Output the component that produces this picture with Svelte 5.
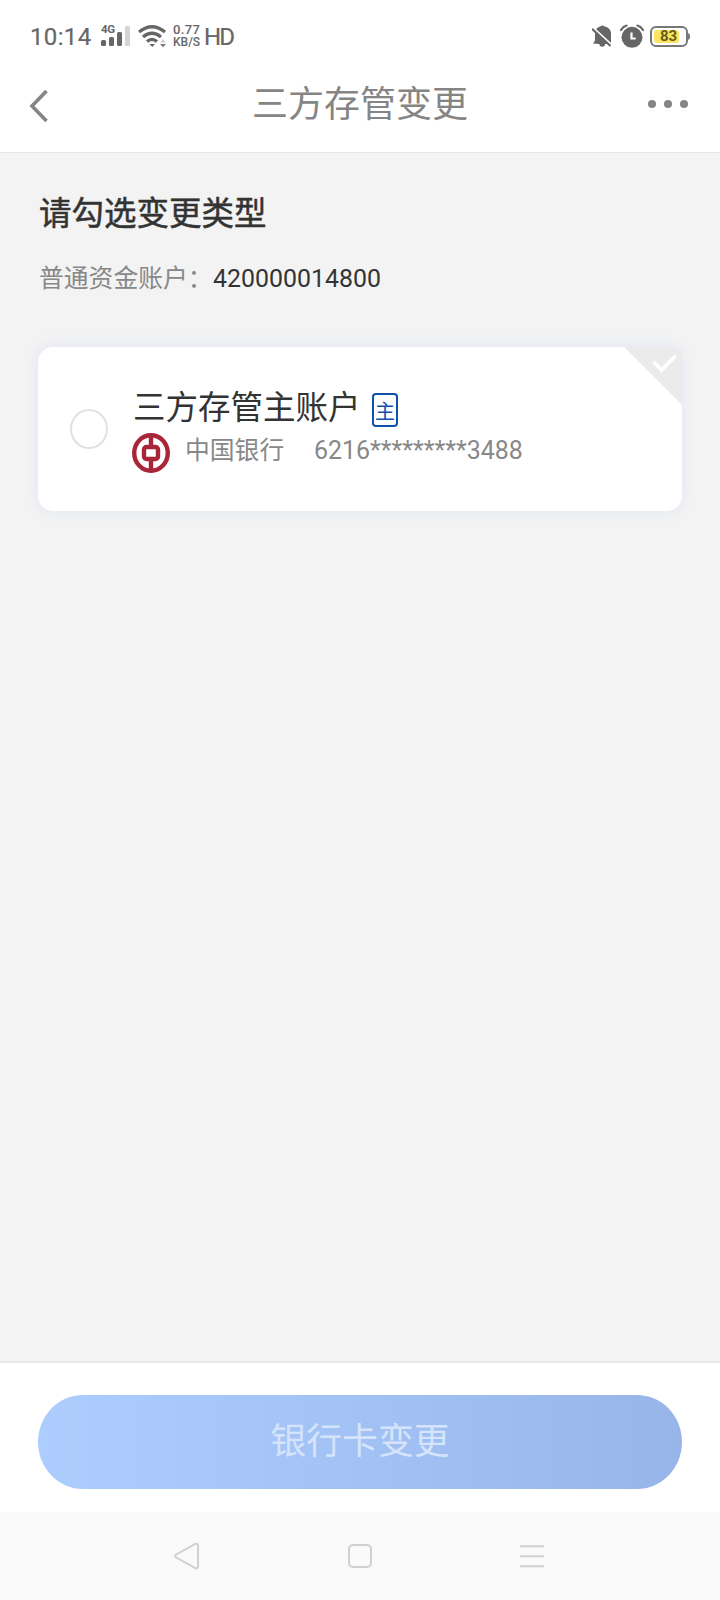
<script>
  const account = '420000014800';
  const bank = { name: '中国银行', card: '6216*********3488' };
</script>

<div class="screen">
  <div class="status">
    <span class="time">10:14</span>
    <div class="signal">
      <span class="gen">4G</span>
      <svg width="30" height="22" viewBox="0 0 30 22">
        <g fill="#666">
          <rect x="0" y="15" width="5" height="6" rx="1.5" />
          <rect x="8" y="12" width="5" height="9" rx="1.5" />
          <rect x="16" y="7" width="5" height="14" rx="1.5" />
        </g>
        <rect x="24" y="1" width="5" height="20" rx="1.5" fill="#d4d4d4" />
      </svg>
    </div>
    <svg class="wifi" width="30" height="24" viewBox="0 0 30 24">
      <g fill="none" stroke="#666" stroke-width="3.300">
        <path d="M1 8Q14 -2.500 27 8" />
        <path d="M5 13Q14 5.500 23 13" />
        <path d="M9 17.600Q14 13.200 19 17.600" />
      </g>
      <path d="M11.500 20h5.500l-2.750 3z" fill="#666" />
      <path d="M22 18.500h6l-3-3.500z" fill="#d0d0d0" />
      <path d="M22 20h6l-3 3.200z" fill="#777" />
    </svg>
    <div class="speed"><span>0.77</span><span>KB/S</span></div>
    <span class="hd">HD</span>

    <svg class="bell" width="20" height="24" viewBox="0 0 20 24">
      <path d="M1 19.500L3 16.500V9.500C3 5.500 5.500 3 8.700 2.200q1.800-1.600 3.600 0C16 3 19 5.500 19 9.500V20h-6a2.800 2.800 0 0 1-5.600 0z" fill="#666" />
      <path d="M.5 3.200L19.500 20.700" stroke="#fff" stroke-width="2.200" />
      <path d="M0 4.700L18.500 22" stroke="#666" stroke-width="2.200" />
    </svg>
    <svg class="alarm" width="24" height="24" viewBox="0 0 24 24">
      <circle cx="12" cy="13.300" r="10.500" fill="#666" />
      <path d="M1 6Q3 2.500 6.500 1.500M23 6Q21 2.500 17.500 1.500" fill="none" stroke="#666" stroke-width="2.200" stroke-linecap="round" />
      <path d="M11.500 8.500v6h4.200" fill="none" stroke="#fff" stroke-width="2.200" />
    </svg>
    <div class="battery"><span>83</span></div>
  </div>

  <header>
    <svg class="back" width="20" height="34" viewBox="0 0 20 34">
      <path d="M18.500 2L4 17L18.500 32" fill="none" stroke="#858585" stroke-width="3.600" />
    </svg>
    <h1>三方存管变更</h1>
    <div class="more"><i></i><i></i><i></i></div>
  </header>

  <main>
    <h2>请勾选变更类型</h2>
    <p class="account"><span class="label">普通资金账户：</span><span class="num">{account}</span></p>

    <div class="card">
      <span class="radio"></span>
      <div class="info">
        <div class="line1"><span class="name">三方存管主账户</span><span class="tag"><b>主</b></span></div>
        <div class="line2">
          <svg width="38" height="40" viewBox="0 0 38 40" preserveAspectRatio="none">
            <g fill="none" stroke="#a82637">
              <ellipse cx="19" cy="20" rx="16.800" ry="17.800" stroke-width="4.400" />
              <rect x="12" y="14" width="14" height="12" rx="2.500" stroke-width="4.400" />
              <path d="M19 2v12M19 26v12" stroke-width="4.400" />
            </g>
          </svg>
          <span class="bank">{bank.name}</span>
          <span class="no">{bank.card}</span>
        </div>
      </div>
      <svg class="corner" width="58" height="58" viewBox="0 0 58 58">
        <path d="M0 0H58V58Z" fill="#ebebeb" />
        <path d="M29.500 15L37.500 23L51.500 9" fill="none" stroke="#fff" stroke-width="3.600" />
      </svg>
    </div>
  </main>

  <footer>
    <button><span>银行卡变更</span></button>
  </footer>

  <nav>
    <svg class="prev" width="28" height="30" viewBox="0 0 28 30">
      <path d="M22.300 2.900L3.200 13.500Q1.200 15 3.200 16.500L22.300 27.100Q25 28 25 25.500V4.500Q25 2 22.300 2.900Z" />
    </svg>
    <svg width="28" height="30" viewBox="0 0 28 30"><rect x="3" y="4" width="22" height="22" rx="4" /></svg>
    <svg width="28" height="30" viewBox="0 0 28 30"><path d="M2 5.300H26M2 15.300H26M2 25.300H26" /></svg>
  </nav>
</div>

<style>
  :global(body) { margin: 0; background: #f3f3f3; }
  .screen {
    width: 720px; height: 1600px; display: flex; flex-direction: column;
    background: #f3f3f3; font-family: "Noto Sans CJK SC", sans-serif; overflow: hidden;
  }
  svg { display: block; flex: none; }
  h1, h2, p { margin: 0; font-weight: 400; }

  .status {
    height: 72px; box-sizing: border-box; flex: none; display: flex; align-items: center;
    padding: 0 30px; background: #fff; color: #666; font-family: Roboto, sans-serif;
  }
  .time, .hd { font-size: 24px; line-height: 28px; padding-top: 1px; -webkit-text-stroke: .2px #666; }
  .time { width: 71px; letter-spacing: .35px; }
  .signal { position: relative; width: 37px; }
  .gen { position: absolute; left: 0; top: -2px; font-size: 11.5px; line-height: 13px; font-weight: 700; letter-spacing: -.4px; }
  .speed {
    display: flex; flex-direction: column; width: 32px; margin-left: 5px;
    font-size: 12px; line-height: 12px; font-weight: 500;
  }
  .speed span { height: 12px; }
  .speed span:first-child { font-size: 13px; letter-spacing: .4px; }
  .hd { flex: 1; margin-left: -1px; letter-spacing: -1.8px; }
  .alarm { margin-left: 8px; }
  .battery {
    position: relative; width: 38px; height: 21px; box-sizing: border-box; margin: 0 2px 0 6px;
    border: 2px solid #777; border-radius: 6px; padding: 2px;
  }
  .battery span {
    display: block; width: 25px; height: 13px; border-radius: 3px; background: #fde562;
    color: #665c1c; font-size: 15px; line-height: 13px; font-weight: 700; text-indent: 6px;
  }
  .battery::after {
    content: ""; position: absolute; right: -4px; top: 5px; width: 3px; height: 7px;
    border-radius: 0 3px 3px 0; background: #777;
  }

  header {
    height: 81px; box-sizing: border-box; flex: none; display: flex; justify-content: space-between;
    padding: 0 32px 0 28px; background: #fff; border-bottom: 1px solid #e6e6e6; color: #858585;
  }
  .back { margin-top: 17px; }
  h1 { font-size: 36px; line-height: 58px; margin-left: 24px; }
  .more { display: flex; gap: 8px; margin-top: 28px; height: 4px; }
  .more i { width: 8px; height: 8px; border-radius: 50%; background: #858585; }

  main { flex: 1; padding: 34px 38px 0; }
  h2 { font-size: 32.5px; line-height: 48px; color: #333; margin-left: 1px; -webkit-text-stroke: .5px #333; }
  .account { display: flex; margin: 23px 0 0 1px; height: 36px; line-height: 36px; }
  .label { width: 174px; font-size: 24.800px; color: #888; white-space: nowrap; }
  .num { font: 24.900px/36px Roboto, sans-serif; color: #333; transform: scaleY(1.05); padding-top: 2px; }
  h2, .label, .name, .bank, .tag b { transform: scaleY(1.03); }

  .card {
    position: relative; display: flex; height: 164px; box-sizing: border-box; margin-top: 53px;
    padding-left: 32px; background: #fff; border-radius: 15px; box-shadow: 0 0 14px rgba(190, 205, 245, .35);
  }
  .radio { width: 38px; height: 40px; box-sizing: border-box; margin-top: 62px; border: 2px solid #e1e1e1; border-radius: 50%; }
  .info { margin-left: 24px; padding-top: 34px; }
  .line1 { display: flex; height: 52px; }
  .name { font-size: 32.500px; line-height: 48px; color: #333; margin-left: 1px; width: 239px; }
  .tag {
    width: 26px; height: 34px; box-sizing: border-box; margin-top: 12px; border: 2px solid #0f4fae;
    border-radius: 4px; color: #0f4fae; display: flex; justify-content: center;
  }
  .tag b { font-size: 20px; line-height: 32px; font-weight: 400; }
  .line2 { display: flex; height: 40px; line-height: 30px; }
  .bank { margin-left: 15px; font-size: 24.800px; color: #888; width: 129px; }
  .no { font: 24.950px/36px Roboto, sans-serif; color: #888; transform: scaleY(1.05); }
  .corner { position: absolute; top: 0; right: 0; border-top-right-radius: 9px; }

  footer { height: 151px; box-sizing: border-box; flex: none; padding: 32px 38px 0; border-top: 2px solid #e9e9e9; background: #fff; }
  button {
    width: 644px; height: 94px; padding: 0 0 8px; border: 0; border-radius: 45px / 47px;
    background: linear-gradient(90deg, #adcdff, #97b5e9); color: #d5e4fb;
    font: 400 35.800px/52px "Noto Sans CJK SC", sans-serif;
  }

  nav { height: 88px; flex: none; display: flex; justify-content: center; gap: 144px; align-items: center; background: #f9f9f9; }
  nav svg { fill: none; stroke: #d0d0d0; stroke-width: 2; }
  .prev { margin: 0 1px 0 -1px; }
</style>
